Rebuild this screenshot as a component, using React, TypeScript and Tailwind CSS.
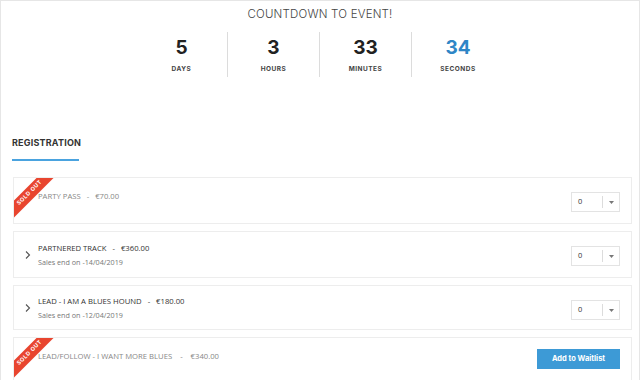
import React from "react";

function Ribbon() {
  return (
    <div className="absolute left-[-25px] top-[9px] w-[82px] h-[12px] bg-[#e8452f] -rotate-45 flex items-center justify-center">
      <span className="text-white text-[5.5px] font-bold tracking-[0.6px] leading-none" style={{ fontFamily: "Inter, sans-serif" }}>
        SOLD OUT
      </span>
    </div>
  );
}

function Select() {
  return (
    <div className="w-[49px] h-[20px] mt-[4px] border border-[#e3e3e3] bg-white flex items-center">
      <span className="text-[7.5px] text-[#333] pl-[6px] flex-1">0</span>
      <span className="w-px h-[12px] bg-[#dcdcdc]" />
      <span className="w-[16px] flex items-center justify-center">
        <svg width="5" height="3" viewBox="0 0 5 3"><path d="M0 0h5L2.5 3z" fill="#777" /></svg>
      </span>
    </div>
  );
}

function Chevron() {
  return (
    <svg width="6" height="9" viewBox="0 0 6 9" className="absolute left-[11px] top-1/2 -translate-y-1/2">
      <path d="M1 1l3.5 3.5L1 8" fill="none" stroke="#555" strokeWidth="1.1" />
    </svg>
  );
}

export default function App() {
  const font = { fontFamily: "'Open Sans', sans-serif" };
  const head = { fontFamily: "Inter, sans-serif" };
  return (
    <div className="w-[640px] h-[380px] overflow-hidden bg-white border border-[#e6e6e6] border-b-0" style={font}>
      <div className="text-center text-[11.5px] leading-[18px] text-[#444] font-light pt-[4px] tracking-[0.2px]" style={head}>
        COUNTDOWN TO EVENT!
      </div>
      <div className="flex justify-center mt-[9px]">
        {[
          ["5", "DAYS"],
          ["3", "HOURS"],
          ["33", "MINUTES"],
          ["34", "SECONDS"],
        ].map(([n, l], i) => (
          <div key={l} className={`w-[92px] h-[45px] flex flex-col items-center ${i < 3 ? "border-r border-[#dcdcdc]" : ""}`}>
            <div className={`text-[19px] font-bold leading-[22px] mt-[5px] ${i === 3 ? "text-[#2f86c6]" : "text-[#222]"}`} style={head}>{n}</div>
            <div className="text-[6.5px] font-bold text-[#444] tracking-[0.5px] mt-[6px]" style={head}>{l}</div>
          </div>
        ))}
      </div>
      <div className="pl-[11px] mt-[59px]">
        <div className="text-[9px] font-bold text-[#333] leading-[14px] tracking-[0.2px]" style={head}>REGISTRATION</div>
        <div className="w-[67px] h-[2px] bg-[#4aa3df] mt-[9px]" />
      </div>
      <div className="ml-[12px] mr-[7px] mt-[16px] flex flex-col gap-[7px]">
        <div className="relative overflow-hidden h-[47px] border border-[#ededed] flex items-start pt-[10px] pl-[24px] pr-[11px]">
          <Ribbon />
          <div className="flex-1 text-[7.7px] leading-[12px] mt-[2px] text-[#888]">PARTY PASS&nbsp;&nbsp;&nbsp;-&nbsp;&nbsp;&nbsp;€70.00</div>
          <Select />
        </div>
        <div className="relative h-[47px] border border-[#ededed] flex items-start pt-[10px] pl-[24px] pr-[11px]">
          <Chevron />
          <div className="flex-1">
            <div className="text-[7.7px] text-[#333] leading-[12px]">PARTNERED TRACK&nbsp;&nbsp;&nbsp;-&nbsp;&nbsp;&nbsp;€360.00</div>
            <div className="text-[7.2px] text-[#777] leading-[12px] mt-[2px]">Sales end on -14/04/2019</div>
          </div>
          <Select />
        </div>
        <div className="relative h-[45px] border border-[#ededed] flex items-start pt-[9px] pl-[24px] pr-[11px]">
          <Chevron />
          <div className="flex-1">
            <div className="text-[7.7px] text-[#333] leading-[12px]">LEAD - I AM A BLUES HOUND&nbsp;&nbsp;&nbsp;-&nbsp;&nbsp;&nbsp;€180.00</div>
            <div className="text-[7.2px] text-[#777] leading-[12px] mt-[2px]">Sales end on -12/04/2019</div>
          </div>
          <div className="mt-[1px]"><Select /></div>
        </div>
        <div className="relative overflow-hidden h-[46px] border border-[#ededed] flex items-start pt-[10px] pl-[24px] pr-[11px]">
          <Ribbon />
          <div className="flex-1 text-[7.7px] leading-[12px] mt-[2px] text-[#888]">LEAD/FOLLOW - I WANT MORE BLUES&nbsp;&nbsp;&nbsp;&nbsp;-&nbsp;&nbsp;&nbsp;&nbsp;€340.00</div>
          <div className="w-[83px] h-[20px] mt-[1px] bg-[#3d9ad6] text-white text-[7.5px] font-bold flex items-center justify-center" style={head}>
            Add to Waitlist
          </div>
        </div>
      </div>
    </div>
  );
}
